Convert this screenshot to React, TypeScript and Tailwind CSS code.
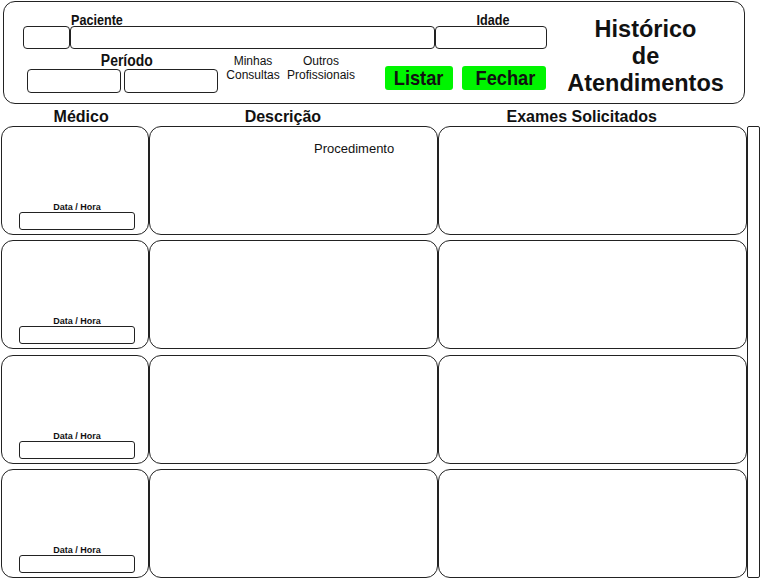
import React from "react";

function N({ children, origin = "origin-center" }: { children: React.ReactNode; origin?: string }) {
  return <span className={`inline-block scale-x-[0.87] ${origin}`}>{children}</span>;
}

function Row({ first }: { first?: boolean }) {
  return (
    <div className="flex h-[108.9px]">
      <div className="w-[148px] h-full border border-[#222] rounded-[12px] flex flex-col justify-end items-start pl-[17px] pb-[4px]">
        <div className="w-[116px] text-center text-[9px] font-bold leading-[9px] text-[#111]">Data / Hora</div>
        <div className="w-[116px] h-[18px] border border-[#222] rounded-[3px]" />
      </div>
      <div className="w-[289px] h-full border border-[#222] rounded-[12px] pl-[164px] pt-[14px]">
        {first && <div className="text-[13px] leading-[16px] text-[#111]">Procedimento</div>}
      </div>
      <div className="w-[309px] h-full border border-[#222] rounded-[12px]" />
    </div>
  );
}

export default function App() {
  return (
    <div className="w-[760px] h-[581px] bg-white relative overflow-hidden" style={{ fontFamily: '"Liberation Sans", Arial, sans-serif' }}>
      <div className="ml-[3px] mt-[1px] w-[742px] h-[103px] border border-[#222] rounded-[12px] flex">
        <div className="pl-[19px] flex flex-col">
          <div className="flex h-[24px] items-end">
            <div className="w-[47px]" />
            <div className="w-[365px] pl-[1px] text-[14.5px] font-bold leading-[12px] text-[#111]"><N origin="origin-left">Paciente</N></div>
            <div className="w-[112px] pl-[3px] text-center text-[14.5px] font-bold leading-[12px] text-[#111]"><N>Idade</N></div>
          </div>
          <div className="flex h-[23px]">
            <div className="w-[47px] h-full border border-[#222] rounded-[4px]" />
            <div className="w-[365px] h-full border border-[#222] rounded-[4px]" />
            <div className="w-[112px] h-full border border-[#222] rounded-[4px]" />
          </div>
          <div className="flex items-start">
            <div className="ml-[4px] w-[191px] flex flex-col mt-[3px]">
              <div className="pl-[9px] text-center text-[16px] font-bold leading-[17px] text-[#111]"><N>Período</N></div>
              <div className="flex gap-[3px] h-[24px]">
                <div className="w-[94px] h-full border border-[#222] rounded-[4px]" />
                <div className="w-[94px] h-full border border-[#222] rounded-[4px]" />
              </div>
            </div>
            <div className="ml-[3px] w-[64px] mt-[5px] text-center text-[12px] leading-[14px] text-[#111]">Minhas<br />Consultas</div>
            <div className="ml-[1px] w-[70px] mt-[5px] text-center text-[12px] leading-[14px] text-[#111]">Outros<br />Profissionais</div>
            <div className="ml-[29px] mt-[17px] w-[68px] h-[24px] bg-[#00f500] rounded-[3px] flex items-center justify-center text-[21px] font-bold leading-[24px] text-[#111]"><N>Listar</N></div>
            <div className="ml-[9px] mt-[17px] w-[84px] h-[24px] bg-[#00f500] rounded-[3px] flex items-center justify-center pl-[3px] text-[21px] font-bold leading-[24px] text-[#111]"><N>Fechar</N></div>
          </div>
        </div>
        <div className="flex-1 flex items-center justify-center pt-[7px]">
          <div className="text-center text-[23.5px] font-bold leading-[27px] text-[#111]">Histórico<br />de<br />Atendimentos</div>
        </div>
      </div>
      <div className="flex h-[22px] items-center pt-[3px] text-[16px] font-bold text-[#111] leading-[18px]">
        <div className="w-[163px] text-center">Médico</div>
        <div className="w-[242px] text-center">Descrição</div>
        <div className="w-[358px] text-center">Exames Solicitados</div>
      </div>
      <div className="flex">
        <div className="ml-[1px] flex flex-col gap-[5.6px]">
          <Row first />
          <Row />
          <Row />
          <Row />
        </div>
        <div className="w-[13px] h-[452px] border border-[#222] rounded-[2px] bg-white" />
      </div>
    </div>
  );
}
